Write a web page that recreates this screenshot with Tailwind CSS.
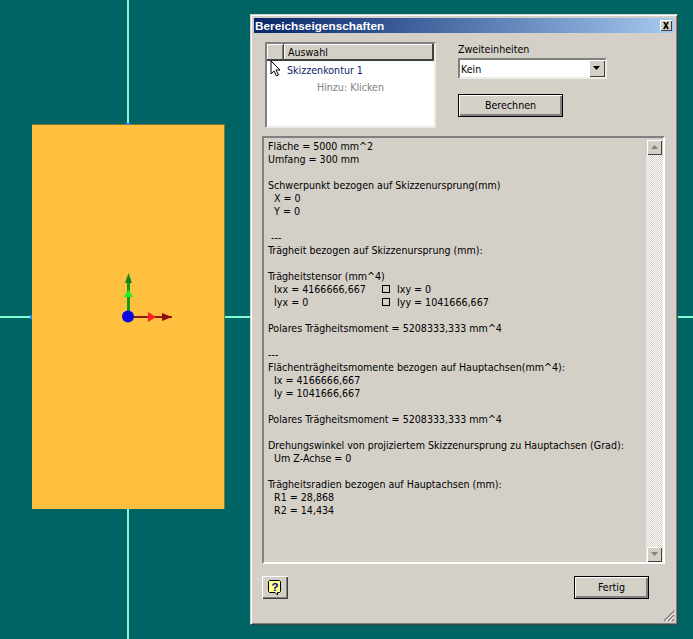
<!DOCTYPE html>
<html lang="de">
<head>
<meta charset="utf-8">
<script src="https://cdn.jsdelivr.net/npm/@tailwindcss/browser@4"></script>
<title>Bereichseigenschaften</title>
</head>
<body class="m-0">
<div class="relative w-[693px] h-[639px] overflow-hidden bg-[#006464] font-['DejaVu_Sans_Condensed','Liberation_Sans',sans-serif] text-[10.6px] leading-[13px] text-black">
  <!-- crosshair -->
  <div class="absolute left-[127px] top-0 w-[2px] h-[639px] bg-[#7fffd4]"></div>
  <div class="absolute left-0 top-[316px] w-[693px] h-[2px] bg-[#7fffd4]"></div>
  <!-- profile -->
  <div class="absolute left-[32px] top-[124px] w-[193px] h-[385px] bg-[#ffc040] border-t border-r border-[#7f7a30]"></div>
  <div class="absolute left-[30px] top-[315px] w-[2px] h-[4px] bg-[#3080ff]"></div>
  <div class="absolute left-[126px] top-[123px] w-[4px] h-[2px] bg-[#3080ff]"></div>
  <svg class="absolute left-[115px] top-[265px]" width="65" height="65" viewBox="115 265 65 65">
    <rect x="127" y="280" width="3" height="36" fill="#159a15"/>
    <polygon points="128.5,273 132,283 125,283" fill="#0d8a0d"/>
    <polygon points="128.5,290 133.500,297 123.500,297" fill="#22f022"/>
    <rect x="128" y="316" width="44" height="2" fill="#8c1c1c"/>
    <polygon points="148,312 156,317 148,322" fill="#ff2020"/>
    <polygon points="162,313 172,317 162,321" fill="#8c1010"/>
    <circle cx="128" cy="316.500" r="6" fill="#0808e0"/>
  </svg>

  <!-- dialog -->
  <div class="absolute left-[250px] top-[14px] w-[428px] h-[611px] bg-[#d4d0c8] border border-t-[#d4d0c8] border-l-[#d4d0c8] border-r-[#404040] border-b-[#404040] shadow-[inset_1px_1px_0_#fff,inset_-1px_-1px_0_#808080] p-[3px] flex flex-col">
    <div class="h-[15px] w-[420px] shrink-0 bg-gradient-to-r from-[#0a246a] to-[#a6caf0] flex items-center justify-between pl-px pr-[2px]">
      <span class="text-white font-bold font-['Liberation_Sans',sans-serif] text-[11.8px] leading-[15px] pt-px">Bereichseigenschaften</span>
      <span class="w-[12px] h-[11px] bg-[#d4d0c8] shadow-[inset_1px_1px_0_#fff,inset_-1px_-1px_0_#404040] flex items-center justify-center">
        <svg width="8" height="7" viewBox="0 0 8 7"><path d="M1 0l2 0 1 2 1-2 2 0-2 3 2 4-2 0-1-2-1 2-2 0 2-4z" fill="#000"/></svg>
      </span>
    </div>

    <div class="flex pl-[11px] pt-[9px] shrink-0">
      <!-- selection -->
      <div class="relative w-[171px] h-[86px] bg-white border-2 border-t-[#808080] border-l-[#808080] border-r-[#ecebe6] border-b-[#ecebe6]">
        <div class="flex h-[17px] bg-[#d4d0c8] border-b-2 border-[#404040]">
          <div class="w-[16px] shadow-[inset_1px_1px_0_#fff,inset_-1px_0_0_#808080]"></div>
          <div class="flex-1 pl-[4px] border-l border-[#404040] border-r-2 shadow-[inset_1px_1px_0_#fff] leading-[17px]">Auswahl</div>
        </div>
        <div class="pl-[20px] pt-px leading-[17px] text-[#0a246a]">Skizzenkontur 1</div>
        <div class="pl-[50px] leading-[17px] text-[#808080]">Hinzu: Klicken</div>
        <svg class="absolute left-[3px] top-[16px]" width="11" height="17" viewBox="0 0 11 17"><path d="M1 1v13l3-3 2.500 5 2-1-2.500-5h4z" fill="#fff" stroke="#000"/></svg>
      </div>
      <!-- right controls -->
      <div class="ml-[22px] w-[149px]">
        <div class="h-[16px] pt-px">Zweiteinheiten</div>
        <div class="h-[21px] w-[149px] bg-white border-2 border-t-[#808080] border-l-[#808080] border-r-[#ecebe6] border-b-[#ecebe6] flex items-center justify-between pl-px">
          <span class="pt-px">Kein</span>
          <span class="w-[16px] h-[17px] bg-[#d4d0c8] shadow-[inset_1px_1px_0_#fff,inset_-1px_-1px_0_#404040] flex items-center justify-center">
            <svg width="8" height="5" viewBox="0 0 8 5"><path d="M0 0h7l-3.500 4z" fill="#000"/></svg>
          </span>
        </div>
        <div class="mt-[15px] w-[105px] h-[23px] border border-black bg-[#d4d0c8] shadow-[inset_1px_1px_0_#fff,inset_-2px_-2px_0_#808080] flex items-center justify-center">Berechnen</div>
      </div>
    </div>

    <!-- results -->
    <div class="mt-[8px] ml-[8px] w-[403px] h-[428px] shrink-0 border-2 border-t-[#808080] border-l-[#808080] border-r-white border-b-white flex">
      <pre class="flex-1 m-0 pl-[4px] pt-[2px] font-['DejaVu_Sans_Condensed','Liberation_Sans',sans-serif] text-[10.6px] leading-[13px] whitespace-pre">Fläche = 5000 mm^2
Umfang = 300 mm

Schwerpunkt bezogen auf Skizzenursprung(mm)
  X = 0
  Y = 0

 ---
Trägheit bezogen auf Skizzenursprung (mm):

Trägheitstensor (mm^4)
<span class="inline-block w-[114px]">  Ixx = 4166666,667</span><span class="inline-block w-[8px] h-[8px] border border-black"></span><span class="ml-[7px]">Ixy = 0</span>
<span class="inline-block w-[114px]">  Iyx = 0</span><span class="inline-block w-[8px] h-[8px] border border-black"></span><span class="ml-[7px]">Iyy = 1041666,667</span>

Polares Trägheitsmoment = 5208333,333 mm^4

---
Flächenträgheitsmomente bezogen auf Hauptachsen(mm^4):
  Ix = 4166666,667
  Iy = 1041666,667

Polares Trägheitsmoment = 5208333,333 mm^4

Drehungswinkel von projiziertem Skizzenursprung zu Hauptachsen (Grad):
  Um Z-Achse = 0

Trägheitsradien bezogen auf Hauptachsen (mm):
  R1 = 28,868
  R2 = 14,434</pre>
      <div class="w-[17px] flex flex-col bg-[repeating-conic-gradient(#d4d0c8_0_25%,#fff_0_50%)] bg-[length:2px_2px]">
        <div class="h-[17px] bg-[#d4d0c8] pt-[2px] pl-px pr-px">
          <div class="h-[15px] bg-[#d4d0c8] shadow-[inset_1px_1px_0_#fff,inset_-1px_-1px_0_#404040] flex items-center justify-center">
            <svg width="8" height="5" viewBox="0 0 8 5"><path d="M0 4h7l-3.500-4z" fill="#808080"/></svg>
          </div>
        </div>
        <div class="flex-1"></div>
        <div class="h-[15px] mx-px bg-[#d4d0c8] shadow-[inset_1px_1px_0_#fff,inset_-1px_-1px_0_#404040] flex items-center justify-center">
          <svg width="8" height="5" viewBox="0 0 8 5"><path d="M0 0h7l-3.500 4z" fill="#808080"/></svg>
        </div>
      </div>
    </div>

    <!-- footer -->
    <div class="mt-[12px] ml-[8px] w-[387px] flex justify-between shrink-0">
      <div class="w-[26px] h-[23px] bg-[#d4d0c8] shadow-[inset_1px_1px_0_#fff,inset_-1px_-1px_0_#404040,inset_-2px_-2px_0_#808080] flex items-center justify-center">
        <svg width="14" height="16" viewBox="0 0 14 16">
          <path d="M1.500.5h10l1 1v10l-1 1h-2v2.500l-2.500-2.500h-5.500l-1-1v-10z" fill="#ffff90" stroke="#000"/>
          <text x="7" y="10.500" text-anchor="middle" font-family="Liberation Sans" font-size="11.500" font-weight="bold" fill="#000080">?</text>
        </svg>
      </div>
      <div class="w-[75px] h-[23px] border border-black bg-[#d4d0c8] shadow-[inset_1px_1px_0_#fff,inset_-2px_-2px_0_#808080] flex items-center justify-center">Fertig</div>
    </div>

    <svg class="absolute right-[2px] bottom-[2px]" width="12" height="12" viewBox="0 0 12 12">
      <path d="M11 1 1 11M11 5 5 11M11 9 9 11" stroke="#808080" stroke-width="1.300"/>
      <path d="M11 3 3 11M11 7 7 11" stroke="#fff" stroke-width="1"/>
    </svg>
  </div>
</div>
</body>
</html>
